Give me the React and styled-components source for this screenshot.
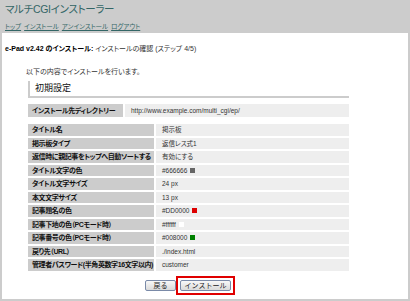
import React from 'react';
import styled, { createGlobalStyle } from 'styled-components';

const GlobalStyle = createGlobalStyle`
  html, body {
    margin: 0;
    padding: 0;
    background: #cccccc;
  }
  body {
    font-family: "Liberation Sans", "Noto Sans CJK JP", sans-serif;
    font-feature-settings: "palt";
    font-size: 7px;
    color: #222;
  }
`;

const Page = styled.div`
  width: 410px;
  height: 301px;
  background: #cccccc;
  overflow: hidden;
`;

const Header = styled.div`
  height: 33px;
  padding: 0 5px;
  display: flex;
  flex-direction: column;
`;

const Title = styled.h1`
  margin: 0;
  padding-top: 2px;
  height: 17px;
  line-height: 14px;
  font-size: 10.5px;
  font-weight: normal;
  letter-spacing: -0.3px;
  color: #336666;
`;

const Nav = styled.div`
  display: flex;
  gap: 3px;
  margin-top: 3px;
  line-height: 10px;
`;

const NavLink = styled.a`
  font-size: 6.5px;
  color: #336666;
  text-decoration: underline;
`;

const Panel = styled.div`
  background: #ffffff;
  margin: 0 2px;
  height: 266px;
  padding: 11px 3px 0;
  box-sizing: border-box;
`;

const Step = styled.div`
  font-size: 7px;
  line-height: 10px;
  color: #333;
  strong {
    color: #000;
  }
`;

const Content = styled.div`
  margin-left: 23px;
  width: 321px;
`;

const Intro = styled.p`
  margin: 13px 0 0 -2px;
  font-size: 7px;
  line-height: 10px;
  color: #333;
`;

const SectionTitle = styled.div`
  margin-top: 4px;
  height: 17px;
  border-left: 2px solid #cccccc;
  border-bottom: 2px solid #cccccc;
  box-sizing: border-box;
  padding-left: 5px;
  font-size: 9px;
  line-height: 15px;
  color: #111;
`;

const Grid = styled.div`
  display: grid;
  grid-template-columns: ${(p) => p.$label}px 1fr;
  column-gap: 2px;
  row-gap: 2px;
  margin-top: ${(p) => p.$top}px;
`;

const Label = styled.div`
  background: #cccccc;
  height: ${(p) => p.$h}px;
  line-height: ${(p) => p.$h}px;
  padding-left: 4px;
  font-weight: bold;
  font-size: 7px;
  letter-spacing: -0.4px;
  color: #111;
  white-space: nowrap;
`;

const Value = styled.div`
  background: #eeeeee;
  height: ${(p) => p.$h}px;
  line-height: ${(p) => p.$h}px;
  padding-left: 6px;
  font-size: 6.5px;
  color: #333;
  display: flex;
  align-items: center;
  gap: 3px;
  white-space: nowrap;
`;

const Swatch = styled.span`
  display: inline-block;
  width: 5px;
  height: 5px;
  background: ${(p) => p.$color};
`;

const Actions = styled.div`
  display: flex;
  justify-content: center;
  align-items: center;
  margin-top: 5px;
  padding-left: 3px;
`;

const FocusFrame = styled.span`
  display: inline-flex;
  border: 2px solid #e00000;
  padding: 2px;
`;

const Button = styled.button`
  height: 11px;
  width: ${(p) => p.$w}px;
  padding: 0;
  font-family: inherit;
  font-size: 7px;
  line-height: 9px;
  color: #222;
  background: linear-gradient(#f8f8f8, #dadada);
  border: 1px solid #7a8aa8;
  border-radius: 2px;
  box-sizing: border-box;
`;

const settings = [
  { label: 'タイトル名', value: '掲示板' },
  { label: '掲示板タイプ', value: '返信レス式1' },
  { label: '返信時に親記事をトップへ自動ソートする', value: '有効にする' },
  { label: 'タイトル文字の色', value: '#666666', color: '#666666' },
  { label: 'タイトル文字サイズ', value: '24 px' },
  { label: '本文文字サイズ', value: '13 px' },
  { label: '記事題名の色', value: '#DD0000', color: '#dd0000' },
  { label: '記事下地の色（PCモード時）', value: '#ffffff', color: '#ffffff' },
  { label: '記事番号の色（PCモード時）', value: '#008000', color: '#008000' },
  { label: '戻り先（URL）', value: './index.html' },
  { label: '管理者パスワード(半角英数字16文字以内)', value: 'customer' },
];

const App = () => (
  <Page>
    <GlobalStyle />
    <Header>
      <Title>マルチCGIインストーラー</Title>
      <Nav>
        <NavLink href="#">トップ</NavLink>
        <NavLink href="#">インストール</NavLink>
        <NavLink href="#">アンインストール</NavLink>
        <NavLink href="#">ログアウト</NavLink>
      </Nav>
    </Header>
    <Panel>
      <Step>
        <strong>e-Pad v2.42 のインストール:</strong> インストールの確認 (ステップ 4/5)
      </Step>
      <Content>
        <Intro>以下の内容でインストールを行います。</Intro>
        <SectionTitle>初期設定</SectionTitle>
        <Grid $label={95} $top={6}>
          <Label $h={13}>インストール先ディレクトリー</Label>
          <Value $h={13}>http://www.example.com/multi_cgi/ep/</Value>
        </Grid>
        <Grid $label={126} $top={7}>
          {settings.map((s) => (
            <React.Fragment key={s.label}>
              <Label $h={11.5}>{s.label}</Label>
              <Value $h={11.5}>
                {s.value}
                {s.color && <Swatch $color={s.color} />}
              </Value>
            </React.Fragment>
          ))}
        </Grid>
        <Actions>
          <Button $w={31}>戻る</Button>
          <FocusFrame>
            <Button $w={51}>インストール</Button>
          </FocusFrame>
        </Actions>
      </Content>
    </Panel>
  </Page>
);

export default App;
